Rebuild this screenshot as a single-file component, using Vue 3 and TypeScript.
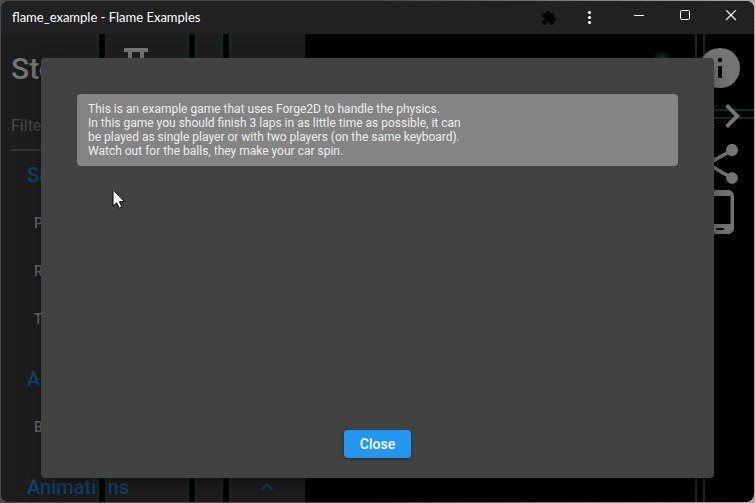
<script setup lang="ts">
import { ref } from 'vue'

interface Category {
  name: string
  stories: string[]
  open?: boolean
}

const categories: Category[] = [
  { name: 'Sample Games', stories: ['Padracing', 'Rogue Shooter', 'T-Rex'] },
  { name: 'Audio', stories: ['Basic Audio'] },
  { name: 'Animations', stories: [], open: true },
]

const lines: string[] = [
  'This is an example game that uses Forge2D to handle the physics.',
  'In this game you should finish 3 laps in as little time as possible, it can',
  'be played as single player or with two players (on the same keyboard).',
  'Watch out for the balls, they make your car spin.',
]

const filter = ref('')
const open = ref(true)
</script>

<template>
  <div class="desktop">
    <div class="window">
      <header class="titlebar">
        <h1 class="title">flame_example - Flame Examples</h1>
        <button class="bar-button small" aria-label="Extensions">
          <svg width="16" height="16" viewBox="0 0 24 24" fill="#000"><path d="M20.5 11H19V7c0-1.1-.9-2-2-2h-4V3.500a2.500 2.500 0 0 0-5 0V5H4c-1.100 0-2 .9-2 2v3.800h1.500a2.700 2.700 0 0 1 0 5.400H2V20c0 1.100.9 2 2 2h3.800v-1.500a2.700 2.700 0 0 1 5.400 0V22H17c1.100 0 2-.9 2-2v-4h1.500a2.500 2.500 0 0 0 0-5z" /></svg>
        </button>
        <button class="bar-button small" aria-label="More">
          <svg width="16" height="16" viewBox="0 0 16 16" fill="#fff"><circle cx="7.500" cy="2.500" r="1.600" /><circle cx="7.500" cy="7.500" r="1.600" /><circle cx="7.500" cy="12.500" r="1.600" /></svg>
        </button>
        <button class="bar-button" aria-label="Minimize">
          <svg width="12" height="12" viewBox="0 0 12 12" stroke="#fff"><path d="M1 5.500h10" /></svg>
        </button>
        <button class="bar-button" aria-label="Maximize">
          <svg width="12" height="12" viewBox="0 0 12 12" fill="none" stroke="#fff"><rect x="1.500" y=".5" width="9" height="9" rx="1.200" /></svg>
        </button>
        <button class="bar-button" aria-label="Close window">
          <svg width="12" height="12" viewBox="0 0 12 12" stroke="#fff" stroke-width="1.200"><path d="M1 0l10 10M11 0L1 10" /></svg>
        </button>
      </header>

      <main class="content">
        <aside class="sidebar">
          <div class="brand">
            <h2>Stories</h2>
            <svg width="32" height="32" viewBox="0 0 32 32" fill="#757575" aria-hidden="true"><path d="M5 4h22a1 1 0 0 1 1 1v3h-4v16h-4V8h-8v16H8V8H4V5a1 1 0 0 1 1-1z" /></svg>
          </div>
          <input v-model="filter" class="filter" type="text" placeholder="Filter stories" aria-label="Filter stories" />
          <nav>
            <section v-for="category in categories" :key="category.name">
              <h3>
                {{ category.name }}
                <svg v-if="category.open" width="24" height="24" viewBox="0 0 24 24" fill="none" stroke="#0f4470" stroke-width="2"><path d="M6.700 14.700L12 9.400l5.300 5.300" /></svg>
              </h3>
              <a v-for="story in category.stories" :key="story" href="#">{{ story }}</a>
            </section>
          </nav>
        </aside>

        <div class="stage">
          <div class="ball"></div>
          <div class="road across"></div>
        </div>
        <div class="road lane-a"></div>
        <div class="road lane-b"></div>
        <div class="road lane-c"></div>
        <div class="road lane-d"></div>

        <div class="tools">
          <button aria-label="Info">
            <svg width="48" height="48" viewBox="0 0 24 24" fill="#757575"><path d="M12 2a10 10 0 1 0 0 20 10 10 0 0 0 0-20zm1 15h-2v-6h2zm0-8h-2V7h2z" /></svg>
          </button>
          <button aria-label="Source code">
            <svg width="48" height="48" viewBox="0 0 24 24" fill="#757575"><path d="M9.400 16.600L4.800 12l4.600-4.600L8 6l-6 6 6 6zm5.200 0l4.600-4.600-4.600-4.600L16 6l6 6-6 6z" /></svg>
          </button>
          <button aria-label="Share">
            <svg width="48" height="48" viewBox="0 0 24 24" fill="#757575"><path d="M18 16.080c-.76 0-1.440.3-1.960.77L8.910 12.700c.05-.23.09-.46.09-.7s-.04-.47-.09-.7l7.050-4.110c.54.5 1.250.81 2.040.81 1.660 0 3-1.340 3-3s-1.340-3-3-3-3 1.340-3 3c0 .24.04.47.09.7L8.040 9.810C7.500 9.310 6.790 9 6 9c-1.660 0-3 1.340-3 3s1.340 3 3 3c.79 0 1.500-.31 2.040-.81l7.120 4.160c-.05.21-.08.43-.08.65 0 1.610 1.310 2.920 2.920 2.920s2.920-1.310 2.920-2.920-1.310-2.920-2.920-2.920z" /></svg>
          </button>
          <button aria-label="Device">
            <svg width="48" height="48" viewBox="0 0 24 24" fill="#757575"><path d="M16 1H8C6.340 1 5 2.340 5 4v16c0 1.660 1.340 3 3 3h8c1.660 0 3-1.340 3-3V4c0-1.660-1.340-3-3-3zm-2 20h-4v-1h4zm3.250-3H6.750V4h10.500z" /></svg>
          </button>
        </div>

        <div v-if="open" class="overlay">
          <div class="dialog" role="dialog" aria-label="Game information">
            <p class="info"><span v-for="line in lines" :key="line">{{ line }}</span></p>
            <button class="close" @click="open = false">Close</button>
          </div>
        </div>
        <svg class="cursor" width="14" height="22" viewBox="0 0 14 22" aria-hidden="true"><path d="M1 1v16.300l3.700-3.500 2.600 5.400 2.600-1.200-2.500-5.300h5z" fill="#fff" stroke="#000" /></svg>
      </main>
    </div>
  </div>
</template>

<style>
body {
  margin: 0;
}
</style>

<style scoped>
* {
  box-sizing: border-box;
}
.desktop {
  height: 100vh;
  padding: 1px;
  background: linear-gradient(90deg, #4a4a4a 50%, #aaa);
  font-family: Roboto, sans-serif;
}
.window {
  display: flex;
  flex-direction: column;
  height: 100%;
  overflow: hidden;
  border-radius: 8px;
  background: #000;
}
button {
  display: flex;
  align-items: center;
  justify-content: center;
  padding: 0;
  border: 0;
  background: none;
  font: inherit;
}
.titlebar {
  display: flex;
  flex: none;
  height: 33px;
  background: #212121;
}
.title {
  flex: 1;
  margin: 0;
  padding-left: 11px;
  color: #fff;
  font: 400 13px/33px Lato, sans-serif;
}
.bar-button {
  width: 46px;
  height: 29px;
}
.small {
  width: 41px;
  height: 33px;
}
.small + .bar-button:not(.small) {
  margin-left: 6px;
}
.content {
  position: relative;
  display: flex;
  flex: 1;
  min-height: 0;
}
.sidebar {
  width: 304px;
  padding: 10px;
  overflow: hidden;
  background: #1d1d1d;
}
.brand {
  display: flex;
  align-items: center;
  gap: 14px;
  height: 48px;
}
h2 {
  margin: 0;
  color: #757575;
  font-size: 30px;
  font-weight: 500;
}
.brand svg {
  align-self: flex-start;
}
.filter {
  display: block;
  width: 100%;
  height: 49px;
  margin-top: 10px;
  padding: 0;
  border: 0;
  border-bottom: 2px solid #343434;
  background: none;
  color: #4a4a4a;
  font: 16px Roboto, sans-serif;
}
.filter::placeholder {
  color: #4a4a4a;
}
h3 {
  display: flex;
  align-items: center;
  justify-content: space-between;
  height: 48px;
  margin: 0;
  padding: 0 16px;
  color: #0f4470;
  font-size: 20px;
  font-weight: 500;
}
section + section h3 {
  margin-top: 12px;
}
nav a {
  display: block;
  height: 48px;
  padding-left: 23px;
  color: #686868;
  font-size: 14px;
  font-weight: 500;
  line-height: 48px;
  text-decoration: none;
}
.stage {
  position: relative;
  flex: 1;
}
.ball {
  position: absolute;
  top: 16px;
  right: 82px;
  width: 20px;
  height: 20px;
  border-radius: 50%;
  background: radial-gradient(#034d32, #000 70%);
}
.road {
  position: absolute;
  top: 0;
  bottom: 0;
  width: 10px;
  border: solid #0b2f21;
  border-width: 0 2px;
  background: #000;
}
.across {
  top: 75px;
  right: 0;
  bottom: auto;
  width: 50px;
  height: 10px;
  border-width: 2px 0;
}
.lane-a {
  left: 96px;
}
.lane-b {
  left: 186px;
}
.lane-c {
  left: 220px;
}
.lane-d {
  right: 49px;
}
.tools {
  position: absolute;
  top: 10px;
  right: 10px;
  display: flex;
  flex-direction: column;
}
.overlay {
  position: absolute;
  inset: 0;
  display: flex;
  padding: 24px 40px;
}
.dialog {
  display: flex;
  flex: 1;
  flex-direction: column;
  align-items: center;
  justify-content: space-between;
  padding: 36px 36px 20px;
  border-radius: 4px;
  background: #424242;
  box-shadow: 0 8px 20px rgba(0, 0, 0, 0.35);
}
.info {
  align-self: stretch;
  margin: 0;
  padding: 8px 11px;
  border-radius: 4px;
  background: #848484;
  color: #eee;
  font-size: 12px;
  font-weight: 400;
  line-height: 14px;
}
.info span {
  display: block;
}
.close {
  height: 28px;
  padding: 0 16px;
  border-radius: 4px;
  background: #2196f3;
  box-shadow: 0 1px 3px rgba(0, 0, 0, 0.4);
  color: #fff;
  font-size: 14px;
  font-weight: 500;
}
.cursor {
  position: absolute;
  top: 155px;
  left: 111px;
}
</style>
